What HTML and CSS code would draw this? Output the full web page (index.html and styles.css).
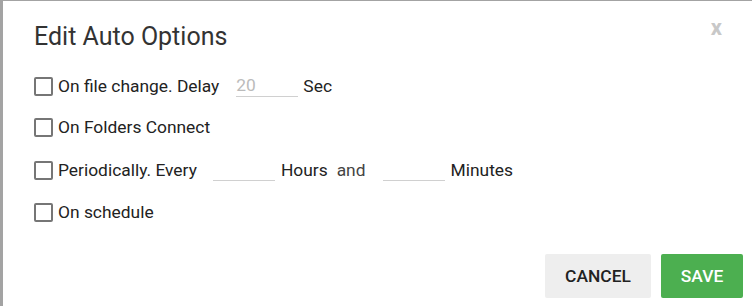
FILE: index.html
```html
<!DOCTYPE html>
<html>
<head>
<meta charset="utf-8">
<link rel="stylesheet" href="styles.css">
</head>
<body>
<div class="backdrop">
  <div class="modal">
    <div class="header">
      <h2 class="title">Edit Auto Options</h2>
      <span class="close">x</span>
    </div>
    <div class="options">
      <label class="row r1"><span class="box"></span><span class="lbl">On file change. Delay</span><span class="field ph">20</span><span class="lbl">Sec</span></label>
      <label class="row r2"><span class="box"></span><span class="lbl">On Folders Connect</span></label>
      <label class="row r3"><span class="box"></span><span class="lbl">Periodically. Every</span><span class="field f2"></span><span class="lbl">Hours</span><span class="and">and</span><span class="field f3"></span><span class="lbl">Minutes</span></label>
      <label class="row r4"><span class="box"></span><span class="lbl">On schedule</span></label>
    </div>
    <div class="footer">
      <button class="btn cancel">CANCEL</button>
      <button class="btn save">SAVE</button>
    </div>
  </div>
</div>
</body>
</html>
```
FILE: styles.css
```css
html, body { margin: 0; padding: 0; }
body { width: 752px; height: 306px; overflow: hidden; background: #a3a3a3; font-family: Roboto, "Liberation Sans", sans-serif; }
.backdrop { padding: 1px 0 0 3px; height: 305px; }
.modal { background: #fff; height: 305px; box-sizing: border-box; padding: 0 9px 0 31px; display: flex; flex-direction: column; }
.header { display: flex; justify-content: space-between; align-items: flex-start; height: 74px; }
.title { margin: 21px 0 0 0; font-size: 25px; font-weight: 400; color: #333; line-height: 30px; }
.close { margin: 14px 21px 0 0; font-size: 22px; font-weight: 700; color: #c8c8c8; line-height: 26px; font-family: Roboto, "Liberation Sans", sans-serif; }
.options { display: flex; flex-direction: column; }
.row { display: flex; align-items: center; height: 22px; font-size: 17.4px; color: #222; }
.r2 { margin-top: 19px; }
.r3 { margin-top: 21px; }
.r4 { margin-top: 20px; }
.box { width: 15px; height: 15px; border: 2px solid #767676; border-radius: 2px; margin-right: 5px; flex: none; }
.field { display: block; width: 62px; height: 22px; border-bottom: 1px solid #d0d0d0; box-sizing: border-box; margin: 0 5px 0 17px; line-height: 21px; flex: none; }
.ph { color: #bbb; }
.f2 { margin-left: 16px; margin-right: 6px; }
.f3 { margin-left: 17px; margin-right: 6px; }
.and { font-size: 17.4px; color: #444; margin-left: 9px; }
.footer { margin-top: auto; margin-bottom: 8px; display: flex; justify-content: flex-end; gap: 10px; }
.btn { border: none; border-radius: 2px; height: 44px; font-family: Roboto, "Liberation Sans", sans-serif; font-size: 17.4px; font-weight: 500; padding: 0; }
.cancel { width: 106px; background: #eeeeee; color: #222; }
.save { width: 82px; background: #4caf50; color: #fff; }
```
